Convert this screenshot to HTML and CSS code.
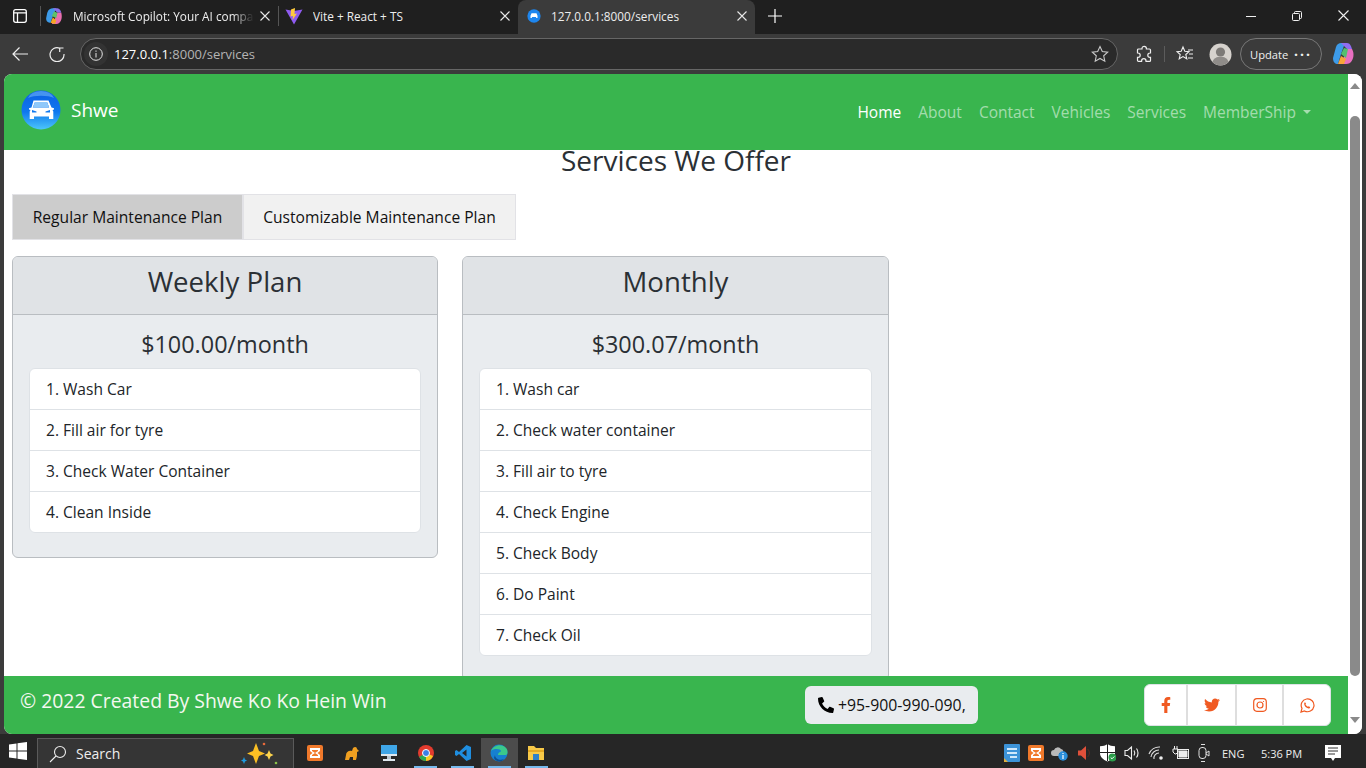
FILE: index.html
```html
<!DOCTYPE html>
<html lang="en">
<head>
<meta charset="utf-8">
<title>Services</title>
<link rel="stylesheet" href="styles.css">
</head>
<body>
<div class="tabbar">
  <div class="tabstrip-btn">
    <svg width="16" height="16" viewBox="0 0 16 16" fill="none" stroke="#fff" stroke-width="1.3"><rect x="1.7" y="1.7" width="12.6" height="12.6" rx="2"/><path d="M1.7 4.8h12.6M5.5 4.8v9.5"/></svg>
  </div>
  <div class="tab-sep"></div>
  <div class="tab">
    <svg class="fav" width="18" height="18" viewBox="0 0 16 16"><path d="M2 5c1-3 3-4 5-4h3L7 8l-2 6c-2 0-4-1-4-4z" fill="#3d9be9"/><path d="M7 1h4c2 0 3 2 3.500 4L11 5 9 3z" fill="#8a6fe8"/><path d="M11 5h3.500c1 4 0 7-1 8-1 2-3 2-5 2H6l3-5z" fill="#e96fb0"/><path d="M5 14l2-5 3 3-1 3z" fill="#f5a623"/><path d="M6 8l2-4 3 1-1 5z" fill="#5dc26a"/></svg>
    <span class="tab-title fade">Microsoft Copilot: Your AI compan</span>
    <svg class="tab-x" width="10" height="10" viewBox="0 0 10 10" stroke="#e8e8e8" stroke-width="1.1"><path d="M.5.500l9 9M9.500.500l-9 9"/></svg>
  </div>
  <div class="tab-sep small"></div>
  <div class="tab">
    <svg class="fav" width="18" height="18" viewBox="0 0 18 18"><path d="M.5 2.500L9 17.500 17.500 2.500 9 4z" fill="#8f5bf0"/><path d="M10 1L6 2.500l-.5 7L8 9l-.500 4L12 6.500 9.500 7z" fill="#ffcb3d"/></svg>
    <span class="tab-title">Vite + React + TS</span>
    <svg class="tab-x" width="10" height="10" viewBox="0 0 10 10" stroke="#e8e8e8" stroke-width="1.1"><path d="M.5.500l9 9M9.500.500l-9 9"/></svg>
  </div>
  <div class="tab active">
    <svg class="fav" width="14" height="14" viewBox="0 0 40 40"><circle cx="20" cy="20" r="19" fill="#1e86ee"/><path d="M10 26v-7l3-7h14l3 7v7h-4v-3H14v3z" fill="#fff"/></svg>
    <span class="tab-title">127.0.0.1:8000/services</span>
    <svg class="tab-x" width="10" height="10" viewBox="0 0 10 10" stroke="#e8e8e8" stroke-width="1.1"><path d="M.5.500l9 9M9.500.500l-9 9"/></svg>
  </div>
  <svg class="newtab" width="14" height="14" viewBox="0 0 14 14" stroke="#fff" stroke-width="1.2"><path d="M7 0v14M0 7h14"/></svg>
  <div class="win-btns">
    <svg width="10" height="10" viewBox="0 0 10 10" stroke="#f0f0f0"><path d="M0 5.500h10"/></svg>
    <svg width="10" height="10" viewBox="0 0 10 10" fill="none" stroke="#f0f0f0"><rect x=".5" y="2.500" width="7" height="7" rx="1"/><path d="M2.500 2.500v-1a1 1 0 0 1 1-1h5a1 1 0 0 1 1 1v5a1 1 0 0 1-1 1h-1"/></svg>
    <svg width="11" height="11" viewBox="0 0 11 11" stroke="#f0f0f0" stroke-width="1.1"><path d="M.5.500l10 10M10.500.500l-10 10"/></svg>
  </div>
</div>

<div class="toolbar">
  <svg class="tool-back" width="16" height="14" viewBox="0 0 16 14" fill="none" stroke="#eee" stroke-width="1.2"><path d="M16 7H1M7.500.500L1 7l6.500 6.500"/></svg>
  <svg class="tool-reload" width="16" height="16" viewBox="0 0 16 16" fill="none" stroke="#eee" stroke-width="1.2"><path d="M10.500 2.100A7 7 0 1 0 15 8M10.700 6V2H14.500"/></svg>
  <div class="address">
    <span class="info-wrap"><svg width="14" height="14" viewBox="0 0 14 14" fill="none" stroke="#e6e6e6"><circle cx="7" cy="7" r="6.300"/><path d="M7 6v4.500M7 3.500v1.300"/></svg></span>
    <span class="url"><b>127.0.0.1</b>:8000/services</span>
    <svg class="star" width="18" height="18" viewBox="0 0 18 18" fill="none" stroke="#c8c8c8" stroke-width="1.1"><path d="M9 1.500l2.300 5 5.400.6-4 3.700 1.100 5.400L9 13.400l-4.800 2.800 1.100-5.400-4-3.700 5.400-.6z"/></svg>
  </div>
  <svg class="tool-ext" width="16" height="18" viewBox="0 0 16 18" fill="none" stroke="#eee" stroke-width="1.2"><path d="M6 3.500a2.200 2.200 0 0 1 4.400 0V4h3.100a1 1 0 0 1 1 1v3h-.5a2.200 2.200 0 0 0 0 4.400h.5v3a1 1 0 0 1-1 1H10v-.5a2.200 2.200 0 0 0-4.400 0v.5H2.500a1 1 0 0 1-1-1v-3H2a2.200 2.200 0 0 0 0-4.400h-.5V5a1 1 0 0 1 1-1H6z"/></svg>
  <div class="tool-sep"></div>
  <svg class="tool-fav" width="18" height="18" viewBox="0 0 18 18" fill="none" stroke="#eee" stroke-width="1.1"><path d="M7 2l1.800 4.200 4.200.4-3.200 2.900 1 4.300L7 11.600l-3.800 2.200 1-4.300L1 6.600l4.200-.4zM12 5h5M13 9h4M12 13h5"/></svg>
  <svg class="tool-avatar" width="23" height="23" viewBox="0 0 23 23"><circle cx="11.500" cy="11.500" r="11" fill="#d6d2cd"/><circle cx="11.500" cy="9" r="4.600" fill="#7d7a77"/><path d="M3.500 19c1-4 4.500-5.300 8-5.300s7 1.300 8 5.300a11 11 0 0 1-16 0z" fill="#8f8c89"/></svg>
  <div class="update"><span>Update</span><span class="dots">···</span></div>
  <svg class="tool-copilot" width="24" height="24" viewBox="0 0 24 24"><path d="M4 5c1-3 3-4 5-4h4L9 12l-3 10c-3 0-5-2-5-6z" fill="#3d9be9"/><path d="M9 1h6c3 0 4 3 5 6h-5l-3-3z" fill="#8f6df0"/><path d="M15 7h5c3 5 1 11-1 13-2 2-4 2-7 2H8l4-7z" fill="#e86fc0"/><path d="M6 22l3-8 5 3-2 5z" fill="#f8a53a"/><path d="M9 12l3-6 4 1-2 9z" fill="#52c06f"/></svg>
</div>

<div class="viewport">
  <div class="page">
    <nav class="navbar">
      <a class="brand">
        <svg class="logo" width="40" height="40" viewBox="0 0 40 40"><defs><linearGradient id="lg" x1="0" y1="0" x2="0" y2="1"><stop offset="0" stop-color="#0c5fe4"/><stop offset=".55" stop-color="#0f78ee"/><stop offset="1" stop-color="#4cc6fa"/></linearGradient></defs><circle cx="20" cy="20" r="19.500" fill="url(#lg)"/><path d="M7 8a14 11 0 0 1 26 0c-6-3-20-3-26 0z" fill="#6db4f7" opacity=".6"/><path d="M12.500 10.500h15l3 7 2.500.8v1.200l-1.500.5.800 1.500v7.500h-4.300v-2.500H13v2.500H8.700v-7.500l.8-1.500-1.500-.5v-1.200l2.500-.8zM14 12l-2.200 5.500h16.400L26 12zM11 20v2.500h4.500V21.500zM29 20l-4.500 1.500v1H29z" fill="#fff" fill-rule="evenodd"/><path d="M14 12h12l2.200 5.500H11.800z" fill="#8fc8fa"/></svg>
        <span>Shwe</span>
      </a>
      <ul class="nav">
        <li class="current">Home</li><li>About</li><li>Contact</li><li>Vehicles</li><li>Services</li><li class="drop">MemberShip<i class="caret"></i></li>
      </ul>
    </nav>
    <main class="main">
      <h1 class="title">Services We Offer</h1>
      <div class="plan-tabs">
        <button class="plan-tab on">Regular Maintenance Plan</button><button class="plan-tab">Customizable Maintenance Plan</button>
      </div>
      <div class="cards">
        <section class="card">
          <h2 class="card-head">Weekly Plan</h2>
          <div class="card-body">
            <h3 class="price">$100.00/month</h3>
            <ul class="items">
              <li>1. Wash Car</li><li>2. Fill air for tyre</li><li>3. Check Water Container</li><li>4. Clean Inside</li>
            </ul>
          </div>
        </section>
        <section class="card">
          <h2 class="card-head">Monthly</h2>
          <div class="card-body">
            <h3 class="price">$300.07/month</h3>
            <ul class="items">
              <li>1. Wash car</li><li>2. Check water container</li><li>3. Fill air to tyre</li><li>4. Check Engine</li><li>5. Check Body</li><li>6. Do Paint</li><li>7. Check Oil</li>
            </ul>
          </div>
        </section>
      </div>
    </main>
    <footer class="footer">
      <p class="copy">© 2022 Created By Shwe Ko Ko Hein Win</p>
      <div class="phone">
        <svg width="16" height="16" viewBox="0 0 512 512"><g transform="matrix(-1 0 0 1 512 0)"><path d="M493.4 24.600l-104-24c-11.300-2.600-22.900 3.300-27.500 13.900l-48 112c-4.200 9.800-1.400 21.300 6.900 28l60.600 49.600c-36 76.700-98.900 140.500-177.200 177.200l-49.600-60.600c-6.800-8.300-18.200-11.100-28-6.900l-112 48C3.900 366.500-2 378.100.6 389.400l24 104C27.100 504.200 36.700 512 48 512c256.100 0 464-207.500 464-464 0-11.200-7.700-20.900-18.600-23.400z"/></g></svg>
        <span>+95-900-990-090,</span>
      </div>
      <div class="social">
        <a class="s-fb"><svg width="10" height="16" viewBox="0 0 320 512"><path d="M279.140 288l14.220-92.660h-88.910v-60.130c0-25.350 12.420-50.060 52.240-50.060h40.420V6.260S260.430 0 225.360 0c-73.220 0-121.080 44.380-121.080 124.720v70.620H22.890V288h81.390v224h100.170V288z"/></svg></a>
        <a class="s-tw"><svg width="16" height="16" viewBox="0 0 512 512"><path d="M459.370 151.716c.325 4.548.325 9.097.325 13.645 0 138.720-105.583 298.558-298.558 298.558-59.452 0-114.680-17.219-161.137-47.106 8.447.974 16.568 1.299 25.340 1.299 49.055 0 94.213-16.568 130.274-44.832-46.132-.975-84.792-31.188-98.112-72.772 6.498.974 12.995 1.624 19.818 1.624 9.421 0 18.843-1.300 27.614-3.573-48.081-9.747-84.143-51.980-84.143-102.985v-1.299c13.969 7.797 30.214 12.670 47.431 13.319-28.264-18.843-46.781-51.005-46.781-87.391 0-19.492 5.197-37.360 14.294-52.954 51.655 63.675 129.300 105.258 216.365 109.807-1.624-7.797-2.599-15.918-2.599-24.040 0-57.828 46.782-104.934 104.934-104.934 30.213 0 57.502 12.670 76.670 33.137 23.715-4.548 46.456-13.320 66.599-25.340-7.798 24.366-24.366 44.833-46.132 57.827 21.117-2.273 41.584-8.122 60.426-16.243-14.292 20.791-32.161 39.308-52.628 54.253z"/></svg></a>
        <a class="s-ig"><svg width="14" height="14" viewBox="0 0 14 14" class="line"><rect x=".7" y=".7" width="12.600" height="12.600" rx="3.200"/><circle cx="7" cy="7" r="3"/><circle cx="10.500" cy="3.500" r=".6" class="dot"/></svg></a>
        <a class="s-wa"><svg width="15" height="15" viewBox="0 0 15 15" class="line"><path d="M1 14l1-3.600a6.400 6.400 0 1 1 2.500 2.500z"/><path d="M5 4.200l1 1.200-.5 1c.5 1 1.300 1.800 2.400 2.400l1-.6 1.300 1c-.3 1-1 1.300-1.700 1.200C6 9.900 4.700 8.400 4.200 6.300c-.1-.9.200-1.700.8-2.100z" class="phone-in"/></svg></a>
      </div>
    </footer>
  </div>
  <div class="scrollbar">
    <i class="arrow up"></i>
    <div class="thumb"></div>
    <i class="arrow down"></i>
  </div>
</div>

<div class="taskbar">
  <svg class="start" width="18" height="18" viewBox="0 0 18 18" fill="#fff"><path d="M0 2.500l7.500-1v7H0zM8.500 1.300L18 0v8.500H8.500zM0 9.500h7.500v7l-7.500-1zM8.500 9.500H18V18l-9.500-1.300z"/></svg>
  <div class="search">
    <svg width="18" height="18" viewBox="0 0 18 18" fill="none" stroke="#eee" stroke-width="1.1"><circle cx="11" cy="7" r="5.500"/><path d="M7 11l-6 6"/></svg>
    <span class="search-text">Search</span>
    <svg class="sparkle" width="38" height="24" viewBox="0 0 38 24"><path d="M15 1l3 8 6 2.500-6 2.500-3 8-3-8-6-2.500 6-2.500z" fill="#fbbf24"/><path d="M28 8l1.500 3.500 3 1.500-3 1.500L28 18l-1.500-3.500-3-1.500 3-1.500z" fill="#fcd34d"/><path d="M3 15l1 2.500 2 1-2 1L3 22l-1-2.500-2-1 2-1z" fill="#1e9be0"/><circle cx="23" cy="2" r="1.300" fill="#e86a3a"/><circle cx="35" cy="21" r="1.300" fill="#8bc34a"/></svg>
  </div>
  <div class="apps">
    <span class="app"><svg width="16" height="16" viewBox="0 0 16 16"><rect width="16" height="16" rx="2" fill="#f0792b"/><path d="M3 3h10v3l-2.500 2L13 10v3H3v-3l2.500-2L3 6zM5 5v1l3 2 3-2V5zM5 11h6v-1L8 8l-3 2z" fill="#fff" fill-rule="evenodd"/></svg></span>
    <span class="app"><svg width="16" height="15" viewBox="0 0 16 15"><path d="M1 14l1-5c0-3 3-5 6-4l1-3c2-2 4-1 4 1l2 2-2 1v3c0 2-1 5-1 5h-3v-3H6l-1 3z" fill="#f0a020"/></svg></span>
    <span class="app"><svg width="18" height="18" viewBox="0 0 18 18"><rect x="1" y="1" width="16" height="11" fill="#3fa6e8"/><rect x="1" y="10" width="16" height="2" fill="#dfe8ef"/><path d="M7 12h4v3H7z" fill="#b8c4cf"/><path d="M3 15h12v2H3z" fill="#dfe8ef"/></svg></span>
    <span class="app run"><svg width="16" height="16" viewBox="0 0 16 16"><circle cx="8" cy="8" r="8" fill="#e33b2e"/><path d="M8 8L1 12a8 8 0 0 0 7 4z" fill="#2da94f"/><path d="M8 8l7 3a8 8 0 0 1-7 5z" fill="#f9c824"/><circle cx="8" cy="8" r="3.500" fill="#3a7fe6" stroke="#fff"/></svg></span>
    <span class="app run"><svg width="16" height="16" viewBox="0 0 16 16"><path d="M11.500 0L16 2v12l-4.500 2L4 9l-2.500 2L0 10V6l1.500-1L4 7zM11.500 4.500L7 8l4.500 3.500z" fill="#1f8ee0" fill-rule="evenodd"/></svg></span>
    <span class="app run active"><svg width="18" height="18" viewBox="0 0 18 18"><circle cx="9" cy="9" r="8.500" fill="#1680d0"/><path d="M1 7c2-6 11-8 15-3 2 2 2 6 0 7H8c0-3 3-3 3-4 0-2-7-3-10 0z" fill="#3bc98b"/><path d="M5 11c0 4 5 6 9 4l-2 2c-3 1-7 0-8-3z" fill="#0c4f94"/></svg></span>
    <span class="app run"><svg width="18" height="16" viewBox="0 0 18 16"><path d="M1 1h6l2 2h8v12H1z" fill="#f7c948"/><path d="M1 5h16v2H1z" fill="#e5a823"/><path d="M6 9h6v6H6z" fill="#2f80c8"/></svg></span>
  </div>
  <div class="tray">
    <span class="ti t-blue"><svg width="16" height="18" viewBox="0 0 16 18"><rect width="16" height="18" rx="1" fill="#3c93d8"/><path d="M3 4h10v2H3zM3 8h10v2H3zM6 12h7v2H6z" fill="#cfe8fb"/><path d="M0 14l4 4H0z" fill="#e0b040"/></svg></span>
    <span class="ti"><svg width="16" height="16" viewBox="0 0 16 16"><rect width="16" height="16" rx="2" fill="#f0792b"/><path d="M3 3h10v3l-2.500 2L13 10v3H3v-3l2.500-2L3 6zM5 5v1l3 2 3-2V5zM5 11h6v-1L8 8l-3 2z" fill="#fff" fill-rule="evenodd"/></svg></span>
    <span class="ti"><svg width="18" height="16" viewBox="0 0 18 16"><path d="M3 11a3 3 0 0 1 0-6 4 4 0 0 1 7-1 3 3 0 0 1 2 4H8v3z" fill="#b9b9b9"/><circle cx="12" cy="11" r="4.700" fill="#2a8fdc"/><path d="M11.400 10h1.200v4h-1.200zM11.400 8h1.200v1.100h-1.200z" fill="#fff"/></svg></span>
    <span class="ti"><svg width="14" height="16" viewBox="0 0 14 16"><path d="M1 5.500h3L9 1v14l-5-4.500H1z" fill="#e0503a"/><path d="M10.500 4c2.500 2 2.500 6 0 8" fill="none" stroke="#5a2a20"/></svg></span>
    <span class="ti"><svg width="16" height="18" viewBox="0 0 16 18"><path d="M7.500 0C5.500 1.500 3 2.200 0 2.200V9c0 4 3 6.500 7.500 8.500C12 15.500 15 13 15 9V2.200C12 2.200 9.500 1.500 7.500 0z" fill="#fff"/><path d="M7 0h1v17H7zM0 8h15v1H0z" fill="#1e1e1e"/><circle cx="12.500" cy="13.500" r="4" fill="#2a9d4a"/><path d="M10.700 13.500l1.300 1.300 2.300-2.300" stroke="#fff" fill="none"/></svg></span>
    <span class="ti"><svg width="17" height="16" viewBox="0 0 17 16" fill="none" stroke="#eee" stroke-width="1.100"><path d="M1 5.500h2.500L7.500 2v12l-4-3.500H1zM10 5.500c1 1.500 1 3.500 0 5M12.500 3.500c2 2.500 2 6.500 0 9"/></svg></span>
    <span class="ti"><svg width="16" height="16" viewBox="0 0 16 16" fill="none" stroke="#ddd" stroke-width="1.100"><path d="M1 9a11 11 0 0 1 11-7M3 12a8 8 0 0 1 8-7M6 14a5 5 0 0 1 5-6"/><circle cx="13" cy="13" r="1.800" fill="#eee" stroke="none"/></svg></span>
    <span class="ti"><svg width="17" height="14" viewBox="0 0 17 14" fill="none" stroke="#eee"><rect x="5.500" y="3.500" width="11" height="9"/><path d="M7 5h8v6H7z" fill="#eee"/><path d="M2.500 0v3M5 0v3M1 3h5v3l-2 2H3L1 6z"/></svg></span>
    <span class="ti"><svg width="14" height="20" viewBox="0 0 14 20" fill="none" stroke="#e0e0e0"><rect x="2" y="4.500" width="7" height="11" rx="3"/><path d="M9 10l3-2v5l-3-2M4 1.500h4M4 18.500h4"/></svg></span>
    <span class="eng">ENG</span>
    <span class="clock">5:36 PM</span>
    <svg class="notif" width="16" height="16" viewBox="0 0 16 16"><path d="M0 0h16v13h-6l-2 3-2-3H0z" fill="#fff"/><path d="M3 3h10M3 6h10M3 9h7" stroke="#333"/></svg>
  </div>
</div>
</body>
</html>
```
FILE: styles.css
```css
* { box-sizing: border-box; }
html, body { margin: 0; height: 100%; overflow: hidden; }
body {
  width: 1366px; height: 768px;
  display: flex; flex-direction: column;
  background: #3b3b3b;
  font-family: "Open Sans", "Noto Sans", sans-serif;
}
h1, h2, h3, p, ul { margin: 0; padding: 0; }
ul { list-style: none; }

/* browser chrome */
.tabbar { height: 34px; background: #1f1f1f; display: flex; align-items: center; flex: none; position: relative; padding-bottom: 3px; }
.tabstrip-btn { width: 40px; padding-left: 12px; display: flex; }
.tab-sep { width: 1px; height: 20px; background: #555; margin-right: -1px; }
.tab-sep.small { margin: 0 1px 0 0; }
.tab { width: 238px; height: 31px; display: flex; align-items: center; padding: 0 8px 0 5px; color: #eee; font: 11.800px "Open Sans", sans-serif; }
.tab.active { width: 237px; height: 34px; margin-bottom: -3px; padding-bottom: 3px; background: #3b3b3b; border-radius: 8px 8px 0 0; padding-left: 9px; }
.fav { flex: none; margin-right: 10px; }
.tab-title { flex: 1; white-space: nowrap; overflow: hidden; }
.tab-title.fade { -webkit-mask-image: linear-gradient(to right, #000 88%, transparent); mask-image: linear-gradient(to right, #000 88%, transparent); }
.tab-x { flex: none; margin-left: 6px; }
.newtab { margin-left: 13px; }
.win-btns { margin-left: auto; width: 125px; padding: 0 17px 0 5px; display: flex; justify-content: space-between; align-items: center; }

.toolbar { height: 40px; flex: none; background: #3b3b3b; display: flex; align-items: center; }
.tool-back { margin-left: 12px; }
.tool-reload { margin-left: 21px; }
.address {
  margin-left: 15px; width: 1038px; height: 32px;
  background: #2a2a2a; border: 1px solid #666; border-radius: 16px;
  display: flex; align-items: center; color: #b4b4b4;
  font: 13px "Open Sans", sans-serif;
}
.info-wrap { width: 24px; height: 24px; margin-left: 3px; border-radius: 50%; background: #333; display: flex; align-items: center; justify-content: center; flex: none; }
.url { margin-left: 6px; }
.url b { color: #fff; font-weight: 400; }
.star { margin-left: auto; margin-right: 8px; }
.tool-ext { margin-left: 18px; }
.tool-sep { width: 1px; height: 16px; background: #5c5c5c; margin-left: 12px; }
.tool-fav { margin-left: 11px; }
.tool-avatar { margin-left: 15px; }
.update {
  margin-left: 8px; width: 82px; height: 32px;
  border: 1px solid #777; border-radius: 16px;
  display: flex; align-items: center; justify-content: space-between;
  padding: 0 9px 0 9px; color: #f0f0f0; font: 11.200px "Open Sans", sans-serif;
}
.dots { font-weight: 700; font-size: 14px; letter-spacing: 2px; }
.tool-copilot { margin-left: 10px; }

/* viewport */
.viewport { flex: none; height: 660px; margin: 0 4px; display: flex; border-radius: 8px; overflow: hidden; background: #fff; }
.page { width: 1344px; display: flex; flex-direction: column; font-family: "Open Sans", sans-serif; }
.navbar { height: 76px; flex: none; background: #39b54e; display: flex; align-items: center; justify-content: space-between; padding: 0 37px 0 17px; }
.brand { display: flex; align-items: center; color: #fff; font-size: 19px; gap: 10px; margin-top: -4px; }
.logo { flex: none; }
.nav { display: flex; gap: 17px; color: rgba(255,255,255,.55); font-size: 15.500px; margin-top: -1px; }
.nav .current { color: #fff; }
.drop { display: flex; align-items: center; }
.caret { width: 0; height: 0; margin-left: 7px; border: 4.500px solid transparent; border-top-color: rgba(255,255,255,.55); border-bottom: 0; }

.main { flex: 1; min-height: 0; padding: 0 8px; color: #212529; }
.title { font-size: 28px; font-weight: 400; text-align: center; line-height: 20px; margin-bottom: 24px; color: #2b3035; }
.plan-tabs { display: flex; margin-bottom: 16px; }
.plan-tab {
  height: 46px; border: 1px solid #e2e2e6; background: #f1f1f1; padding: 0;
  color: #111; font: 15.600px "Open Sans", sans-serif; cursor: pointer;
}
.plan-tab.on { width: 231px; background: #ccc; }
.plan-tab + .plan-tab { width: 273px; }
.cards { display: grid; grid-template-columns: 426px 427px; gap: 24px; align-items: start; }
.card { background: #e9ecef; border: 1px solid #b9bdc1; border-radius: 6px; overflow: hidden; }
.card-head { height: 58px; background: #e0e3e6; border-bottom: 1px solid #b9bdc1; font-size: 27.600px; font-weight: 400; text-align: center; line-height: 48px; color: #2b3035; }
.card-body { padding: 15px 16px 24px; }
.price { font-size: 23.400px; font-weight: 400; text-align: center; line-height: 28px; margin-bottom: 10px; color: #2b3035; }
.items { background: #fff; border: 1px solid #dee2e6; border-radius: 6px; }
.items li { height: 41px; padding: 0 16px; line-height: 40px; font-size: 15.550px; color: #212529; border-bottom: 1px solid #dee2e6; }
.items li:last-child { border-bottom: 0; height: 40px; }

.footer { height: 58px; flex: none; background: #39b54e; display: flex; align-items: center; padding: 0 16px; position: relative; z-index: 1; }
.copy { color: #f4f8f0; font-size: 19.400px; width: 785px; margin-top: -10px; }
.phone { width: 173px; height: 38px; background: #e9ecef; border-radius: 6px; display: flex; align-items: center; gap: 4px; padding-left: 13px; color: #111; font-size: 15.800px; }
.social { margin-left: 166px; width: 187px; height: 42px; background: #fff; border: 1px solid #dee2e6; border-radius: 6px; display: flex; }
.social a { display: flex; align-items: center; justify-content: center; border-right: 2px solid #dedede; fill: #f05a22; }
.social a:last-child { border-right: 0; }
.s-fb { width: 43px; } .s-tw { width: 49px; } .s-ig { width: 47px; } .s-wa { flex: 1; }
.line { fill: none; stroke: #f05a22; stroke-width: 1.200; }
.line .dot { fill: #f05a22; stroke: none; }
.line .phone-in { fill: #f05a22; stroke: none; }

.scrollbar { width: 14px; position: relative; display: flex; flex-direction: column; align-items: center; background: #fff; }
.arrow { width: 0; height: 0; border: 5px solid transparent; flex: none; }
.arrow.up { border-bottom: 6px solid #8a8a8a; border-top: 0; margin-top: 9px; }
.arrow.down { border-top: 6px solid #8a8a8a; border-bottom: 0; margin-top: 41px; }
.thumb { width: 10px; height: 560px; margin-top: 27px; background: #8a8a8a; border-radius: 5px; flex: none; }

/* taskbar */
.taskbar { flex: none; height: 34px; background: #262626; display: flex; align-items: center; color: #eee; position: relative; }
.start { margin-left: 9px; flex: none; }
.search { margin-left: 10px; width: 257px; height: 30px; margin-top: 4px; background: #353535; border: 1px solid #5a5a5a; border-bottom: 0; display: flex; align-items: center; padding-left: 11px; font: 14px "Open Sans", sans-serif; }
.search-text { margin-left: 9px; }
.sparkle { margin-left: auto; margin-right: 14px; }
.apps { display: flex; margin-left: 3px; margin-top: 4px; }
.app { width: 36.800px; height: 30px; display: flex; align-items: center; justify-content: center; position: relative; }
.app.active { background: #4c4c4c; }
.app.run::after { content: ""; position: absolute; left: 7px; right: 7px; bottom: 0; height: 2px; background: #76b9ed; }
.tray { margin-left: auto; display: flex; align-items: center; margin-top: 4px; height: 30px; font: 11px "Open Sans", sans-serif; padding-right: 25px; }
.ti { width: 24px; display: flex; justify-content: center; }
.eng { margin-left: 6px; width: 39px; }
.clock { width: 50px; margin-right: 14px; }
```
